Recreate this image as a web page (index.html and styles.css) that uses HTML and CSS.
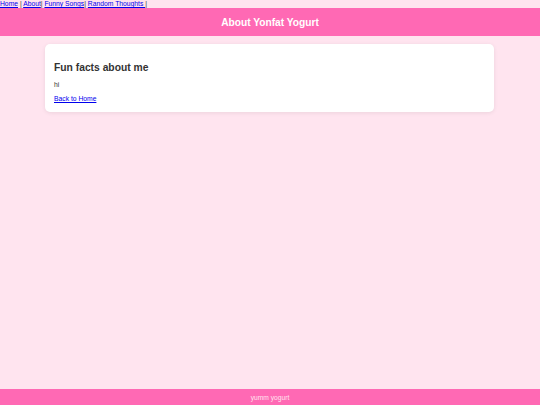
FILE: index.html
```html
<!DOCTYPE html>
<html>
<head>
<meta charset="utf-8">
<link rel="stylesheet" href="styles.css">
</head>
<body>
<nav class="topnav"><a href="#">Home</a> | <a href="#">About</a>| <a href="#">Funny Songs</a>| <a href="#">Random Thoughts </a>|</nav>
<header class="site-header"><h1>About Yonfat Yogurt</h1></header>
<main class="main">
  <section class="card">
    <h2>Fun facts about me</h2>
    <p class="text">hi</p>
    <p class="text"><a href="#">Back to Home</a></p>
  </section>
</main>
<footer class="site-footer">yumm yogurt</footer>
</body>
</html>
```
FILE: styles.css
```css
html, body { margin: 0; padding: 0; }
body {
  font-family: "Liberation Sans", Arial, sans-serif;
  background: #ffe4ef;
  min-height: 100vh;
  display: flex;
  flex-direction: column;
}
.topnav {
  font-size: 6.75px;
  line-height: 8px;
  height: 8px;
  color: #333;
  white-space: nowrap;
}
.topnav a { color: #0000ee; }
.site-header {
  background: #ff69b4;
  height: 28px;
  display: flex;
  align-items: center;
  justify-content: center;
}
.site-header h1 {
  margin: 0;
  color: #fff;
  font-size: 10.2px;
  font-weight: bold;
}
.main { flex: 1; }
.card {
  width: 449px;
  box-sizing: border-box;
  margin: 8px 0 0 45px;
  background: #fff;
  border-radius: 5px;
  padding: 9px;
  box-shadow: 0 1px 4px rgba(0,0,0,0.08);
}
.card h2 {
  margin: 8px 0 7px;
  font-size: 10.3px;
  line-height: 13px;
  color: #333;
}
.text {
  margin: 0 0 6px;
  font-size: 6.75px;
  line-height: 8px;
  color: #333;
}
.text:last-child { margin-bottom: 0; }
.text a { color: #0000ee; }
.site-footer {
  background: #ff69b4;
  color: #ffe4ef;
  height: 16px;
  font-size: 6.7px;
  display: flex;
  align-items: center;
  justify-content: center;
}
```
